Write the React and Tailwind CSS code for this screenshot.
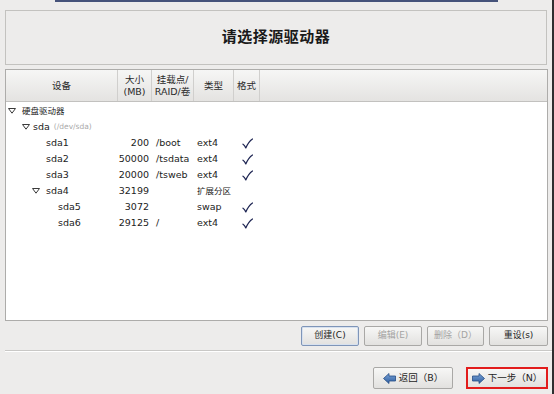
import React from "react";

const FONT = { fontFamily: '"DejaVu Sans", "Noto Sans CJK SC", sans-serif' };

const rows = [
  { level: 0, tree: true, name: "硬盘驱动器" },
  { level: 1, tree: true, name: "sda", hint: "(/dev/sda)" },
  { level: 2, name: "sda1", size: "200", mount: "/boot", type: "ext4", fmt: true },
  { level: 2, name: "sda2", size: "50000", mount: "/tsdata", type: "ext4", fmt: true },
  { level: 2, name: "sda3", size: "20000", mount: "/tsweb", type: "ext4", fmt: true },
  { level: 2, tree: true, name: "sda4", size: "32199", type: "扩展分区" },
  { level: 3, name: "sda5", size: "3072", type: "swap", fmt: true },
  { level: 3, name: "sda6", size: "29125", mount: "/", type: "ext4", fmt: true },
];

const cols = "grid grid-cols-[112px_34px_42px_40px_26px_1fr]";

function Expander() {
  return (
    <svg width="8" height="6" viewBox="0 0 8 6" className="shrink-0">
      <polygon points="0.5,0.5 7.5,0.5 4,5.2" fill="none" stroke="#3a3a3a" strokeWidth="1" />
    </svg>
  );
}

function Arrow({ dir }) {
  return (
    <svg width="13" height="11" viewBox="0 0 13 11" className="shrink-0">
      <defs>
        <linearGradient id={"ag" + dir} x1="0" y1="0" x2="0" y2="1">
          <stop offset="0" stopColor="#7aa3d8" />
          <stop offset="1" stopColor="#2d5d9f" />
        </linearGradient>
      </defs>
      {dir === "left" ? (
        <polygon points="0.5,5.5 6,0.5 6,3 12.5,3 12.5,8 6,8 6,10.5" fill={"url(#ag" + dir + ")"} stroke="#244c85" strokeWidth="0.8" />
      ) : (
        <polygon points="12.5,5.5 7,0.5 7,3 0.5,3 0.5,8 7,8 7,10.5" fill={"url(#ag" + dir + ")"} stroke="#244c85" strokeWidth="0.8" />
      )}
    </svg>
  );
}

function Check() {
  return (
    <svg width="11" height="11" viewBox="0 0 11 11">
      <path d="M1 6.2 C2.2 7 3 8.2 3.8 10 C5.5 6 7.5 3 10.5 1" fill="none" stroke="#1d2452" strokeWidth="1.2" strokeLinecap="round" strokeLinejoin="round" />
    </svg>
  );
}

function Btn({ children, w, disabled, focus }) {
  return (
    <div
      className={`h-[20px] ${w} flex items-center justify-center rounded-[2px] border bg-gradient-to-b from-[#f7f7f6] to-[#e2e1df] text-[9px] ${
        focus ? "border-[#7f95b8] shadow-[inset_0_0_0_1px_#d7e1ef]" : "border-[#a9a8a6]"
      } ${disabled ? "text-[#a3a3a2]" : "text-[#1e1e1e]"}`}
    >
      {children}
    </div>
  );
}

const indent = ["pl-[2px]", "pl-[16px]", "pl-[26px]", "pl-[38px]"];
const slot = ["w-[14px]", "w-[11px]", "w-[14px]", "w-[14px]"];

export default function App() {
  return (
    <div className="w-[554px] h-[394px] bg-[#edeceb] flex overflow-hidden" style={FONT}>
      <div className="flex-1 flex flex-col">
        <div className="ml-[55px] w-[443px] h-[2px] bg-[#46537a]" />

        <div className="mt-[8px] mx-[5px] h-[55px] border border-[#c3c2bf] flex items-center justify-center">
          <span className="text-[15px] font-bold text-[#1a1a1a] tracking-[0.5px]">请选择源驱动器</span>
        </div>

        <div className="mt-[4px] ml-[5px] mr-[4px] h-[252px] border border-[#adacaa] bg-white flex flex-col">
          <div className={`${cols} h-[32px] bg-gradient-to-b from-[#f6f6f5] to-[#e4e3e1] border-b border-[#c2c1bf] text-[9.5px] text-[#2a2a2a] leading-[12px]`}>
            <div className="flex items-center justify-center border-r border-[#d0cfcd]">设备</div>
            <div className="flex flex-col items-center justify-center border-r border-[#d0cfcd]">
              <span>大小</span>
              <span>(MB)</span>
            </div>
            <div className="flex flex-col items-center justify-center border-r border-[#d0cfcd]">
              <span>挂载点/</span>
              <span>RAID/卷</span>
            </div>
            <div className="flex items-center justify-center border-r border-[#d0cfcd]">类型</div>
            <div className="flex items-center justify-center border-r border-[#d0cfcd]">格式</div>
            <div />
          </div>

          <div className="pt-[1px] flex flex-col text-[9.5px] text-[#222]">
            {rows.map((r, i) => (
              <div key={i} className={`${cols} h-[16px] items-center`}>
                <div className={`flex items-center ${indent[r.level]}`}>
                  <span className={`${slot[r.level]} flex items-center shrink-0`}>
                    {r.tree && <Expander />}
                  </span>
                  <span className={r.level === 0 ? "text-[8.5px]" : ""}>{r.name}</span>
                  {r.hint && <span className="ml-[4px] text-[7.5px] text-[#aaaaaa]">{r.hint}</span>}
                </div>
                <div className="text-right pr-[3px]">{r.size}</div>
                <div className="pl-[4px]">{r.mount}</div>
                <div className="pl-[3px] whitespace-nowrap">
                  {r.type === "扩展分区" ? <span className="text-[8.5px]">{r.type}</span> : r.type}
                </div>
                <div className="flex justify-center">{r.fmt && <Check />}</div>
                <div />
              </div>
            ))}
          </div>
        </div>

        <div className="mt-[5px] pr-[4px] flex justify-end gap-[5px]">
          <Btn w="w-[58px]" focus>创建(C)</Btn>
          <Btn w="w-[58px]" disabled>编辑(E)</Btn>
          <Btn w="w-[57px]" disabled>删除（D）</Btn>
          <Btn w="w-[59px]">重设(s)</Btn>
        </div>

        <div className="mt-[4px] ml-[5px] h-[2px] border-t border-[#c9c8c6] border-b border-b-white" />

        <div className="mt-[15px] pr-[4px] flex justify-end items-center gap-[13px]">
          <div className="h-[22px] w-[80px] flex items-center justify-center gap-[3px] rounded-[2px] border border-[#a9a8a6] bg-gradient-to-b from-[#f7f7f6] to-[#e2e1df] text-[9.5px] text-[#1e1e1e]">
            <Arrow dir="left" />
            <span>返回（B）</span>
          </div>
          <div className="h-[22px] w-[82px] flex items-center justify-center gap-[3px] border-2 border-[#e21c1c] bg-gradient-to-b from-[#f7f7f6] to-[#e2e1df] text-[9.5px] text-[#1e1e1e]">
            <Arrow dir="right" />
            <span>下一步（N）</span>
          </div>
        </div>
      </div>
      <div className="w-[2px] bg-[#2e2e30]" />
    </div>
  );
}
